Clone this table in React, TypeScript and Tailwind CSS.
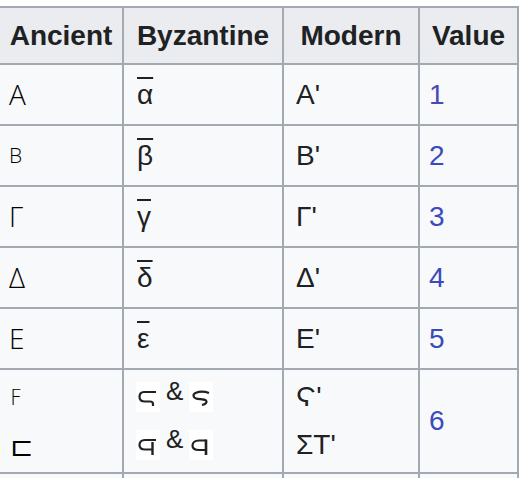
import React from "react";

const ff = { fontFamily: '"Liberation Sans", Arial, sans-serif' };

function Stigma1() {
  return (
    <svg width="24" height="30" viewBox="0 0 24 30" className="bg-white">
      <path d="M20 10 H8 C4.5 10 3.5 12.5 3.5 15 C3.5 17.5 5 19.5 9 19.5 H14 C16 19.5 17 20.5 17 22 V24" fill="none" stroke="#202122" strokeWidth="2.2" />
    </svg>
  );
}
function Stigma2() {
  return (
    <svg width="24" height="30" viewBox="0 0 24 30" className="bg-white">
      <path d="M20 11 C16 9.5 10 9.5 6.5 11 C3.5 12.5 4 15.5 7 16.5 C10 17.5 15 16.5 17 18.5 C18.5 20 17 22 13 23" fill="none" stroke="#202122" strokeWidth="2.2" />
    </svg>
  );
}
function Koppa1() {
  return (
    <svg width="24" height="30" viewBox="0 0 24 30" className="bg-white">
      <path d="M20 10 H9 C5 10 3.5 12.5 3.5 15 C3.5 17.5 5 19.5 9 19.5 H17" fill="none" stroke="#202122" strokeWidth="2.2" />
      <path d="M16.5 12 V25" fill="none" stroke="#202122" strokeWidth="2.4" />
    </svg>
  );
}
function Koppa2() {
  return (
    <svg width="24" height="30" viewBox="0 0 24 30" className="bg-white">
      <path d="M17 10.5 H10 C5.5 10.5 3.5 13 3.5 15.5 C3.5 18 5.5 20 10 20 H17" fill="none" stroke="#202122" strokeWidth="2.2" />
      <path d="M17 9.5 V25" fill="none" stroke="#202122" strokeWidth="2.6" />
    </svg>
  );
}

const ancient = '"Open Sans", "DejaVu Sans", sans-serif';

function Over({ c }: { c: string }) {
  return (
    <span className="[text-decoration-line:overline] [text-decoration-thickness:2px]">{c}</span>
  );
}

const rows: { a: React.ReactNode; b: React.ReactNode; m: React.ReactNode; v: string; vc: string }[] = [
  { a: "Α", b: <Over c="α" />, m: "Α'", v: "1", vc: "text-[#4a48b8]" },
  { a: <span className="text-[21px]">Β</span>, b: <Over c="β" />, m: "Β'", v: "2", vc: "text-[#3a4bbd]" },
  { a: "Γ", b: <Over c="γ" />, m: "Γ'", v: "3", vc: "text-[#3a4bbd]" },
  { a: "Δ", b: <Over c="δ" />, m: "Δ'", v: "4", vc: "text-[#3a4bbd]" },
  { a: "Ε", b: <Over c="ε" />, m: "Ε'", v: "5", vc: "text-[#3a4bbd]" },
];

export default function App() {
  const cell = "bg-[#f8f9fa] flex items-center text-[28px]";
  const dark = "text-[#202122]";
  const blue = "text-[#3a4bbd]";
  const head = "bg-[#eaecf0] flex items-center justify-center text-[28px] font-bold text-[#202122]";
  return (
    <div className="w-[522px] h-[478px] bg-white overflow-hidden" style={ff}>
      <div className="mt-[6px] -ml-[2px] inline-grid grid-cols-[122px_158px_134px_97px] grid-rows-[55px_59px_59px_59px_59px_59px_102px_59px] gap-[2px] p-[2px] bg-[#a2a9b1] leading-[32px]">
        <div className={head}>Ancient</div>
        <div className={head}>Byzantine</div>
        <div className={head}>Modern</div>
        <div className={head}>Value</div>
        {rows.map((r, i) => (
          <React.Fragment key={i}>
            <div className={`${cell} text-black pl-[9px] pb-[2px] text-[26px] font-light`} style={{ fontFamily: ancient }}>{r.a}</div>
            <div className={`${cell} ${dark} pl-[13px]`}>{r.b}</div>
            <div className={`${cell} ${dark} pl-[12px]`}>{r.m}</div>
            <div className={`${cell} pl-[9px] ${r.vc}`}>{r.v}</div>
          </React.Fragment>
        ))}
        <div className={`${cell} text-black pl-[10px] flex-col !items-start justify-center font-light`} style={{ fontFamily: ancient }}>
          <div className="h-[48px] flex items-center text-[21px]">Ϝ</div>
          <div className="h-[48px] flex items-center text-[28px]">⊏</div>
        </div>
        <div className={`${cell} ${dark} pl-[12px] flex-col !items-start justify-center`}>
          <div className="h-[48px] flex items-center gap-[6px]">
            <Stigma1 />
            <span className="text-[26px] -mt-[12px]">&amp;</span>
            <Stigma2 />
          </div>
          <div className="h-[48px] flex items-center gap-[6px]">
            <Koppa1 />
            <span className="text-[26px] -mt-[12px]">&amp;</span>
            <Koppa2 />
          </div>
        </div>
        <div className={`${cell} ${dark} pl-[12px] flex-col !items-start justify-center`}>
          <div className="h-[48px] flex items-center">Ϛ'</div>
          <div className="h-[48px] flex items-center">ΣΤ'</div>
        </div>
        <div className={`${cell} pl-[9px] ${blue}`}>6</div>
        <div className={cell}></div>
        <div className={cell}></div>
        <div className={cell}></div>
        <div className={cell}></div>
      </div>
    </div>
  );
}
